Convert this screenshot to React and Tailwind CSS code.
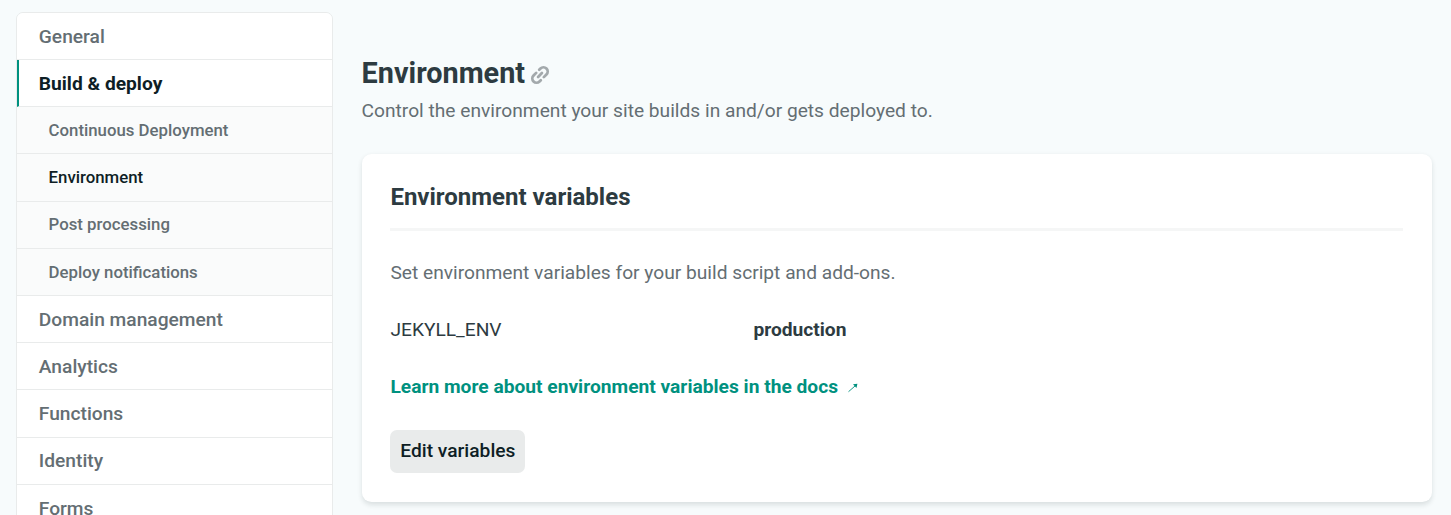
const items = [
  ['General', 0, 0], ['Build & deploy', 0, 1], ['Continuous Deployment', 1, 0], ['Environment', 1, 1],
  ['Post processing', 1, 0], ['Deploy notifications', 1, 0], ['Domain management', 0, 0],
  ['Analytics', 0, 0], ['Functions', 0, 0], ['Identity', 0, 0], ['Forms', 0, 0],
];

function NavItem({ label, sub, active }) {
  const kind = sub
    ? 'pl-[31.6px] pt-[0.6px] text-[16.8px] font-medium bg-[#fafbfb] '
    : 'pt-[2.2px] first:pt-[3px] text-[19.2px] bg-white ' + (active ? 'pl-[19.8px] font-bold border-l-2 border-l-[#00917f] ' : 'pl-[21.8px] font-medium ');
  const tone = active ? 'text-[#0e1e25]' : 'text-[#646e73]';
  return (
    <li className={'flex h-[47.22px] shrink-0 items-center border-b border-b-[#e9ebeb] ' + kind + tone}>
      {label}
    </li>
  );
}

export default function App() {
  return (
    <div className="flex h-[515px] overflow-hidden bg-[#f7fbfc] font-['Roboto',sans-serif] text-[#2d3b41]">
      <nav className="ml-4 mt-[11.7px] w-[317px] shrink-0">
        <ul className="overflow-hidden rounded-t-[7px] border border-[#e9ebeb]">
          {items.map(([label, sub, active]) => (
            <NavItem key={label} label={label} sub={sub} active={active} />
          ))}
        </ul>
      </nav>
      <main className="ml-[28.6px] w-[1070.4px] shrink-0 pt-[55px]">
        <h1 className="flex items-center text-[28.8px] font-bold leading-9">
          Environment
          <svg className="ml-[4.5px] mt-[3px] size-5" viewBox="-10 -10 20 20" fill="none" stroke="#a3a9ac" strokeWidth="2.8" strokeLinecap="round">
            <g transform="rotate(-45)">
              <path d="M-1.2 -4.2H-4.9a4.2 4.2 0 0 0 0 8.4H-3.1M1.2 4.2H4.9a4.2 4.2 0 0 0 0 -8.4H3.1M-2.7 0H2.7" />
            </g>
          </svg>
        </h1>
        <p className="mt-[6px] text-[19.18px] leading-7 text-[#646e73]">Control the environment your site builds in and/or gets deployed to.</p>
        <section className="mt-[29px] h-[348px] rounded-[9.6px] bg-white px-[28.8px] pt-[26px] shadow-[0_2.4px_4.8px_rgba(14,30,37,0.12)]">
          <h2 className="border-b-[3px] border-[#f5f6f6] pb-[14px] text-[24px] font-bold leading-[34px]">Environment variables</h2>
          <p className="mt-[28px] text-[19.18px] leading-7 text-[#646e73]">Set environment variables for your build script and add-ons.</p>
          <dl className="mt-[29px] flex text-[19.2px] leading-7">
            <dt className="w-[363px]">JEKYLL_ENV</dt>
            <dd className="font-bold">production</dd>
          </dl>
          <a className="mt-[29px] flex items-center text-[19.2px] font-bold leading-7 text-[#00917f]">
            Learn more about environment variables in the docs
            <svg className="ml-[10px] mt-[2px] size-[10px]" viewBox="0 0 10 10" fill="none">
              <path d="M.5 8.7 7.5 2.6" stroke="currentColor" strokeWidth="0.9" />
              <path d="M5 1.2 9.4.8 8.5 5Z" fill="currentColor" />
            </svg>
          </a>
          <button className="mt-[29px] h-[43px] w-[135px] rounded-[7px] bg-[#e9ebeb] pb-px text-[19.2px] font-medium text-[#0e1e25]">Edit variables</button>
        </section>
      </main>
    </div>
  );
}
